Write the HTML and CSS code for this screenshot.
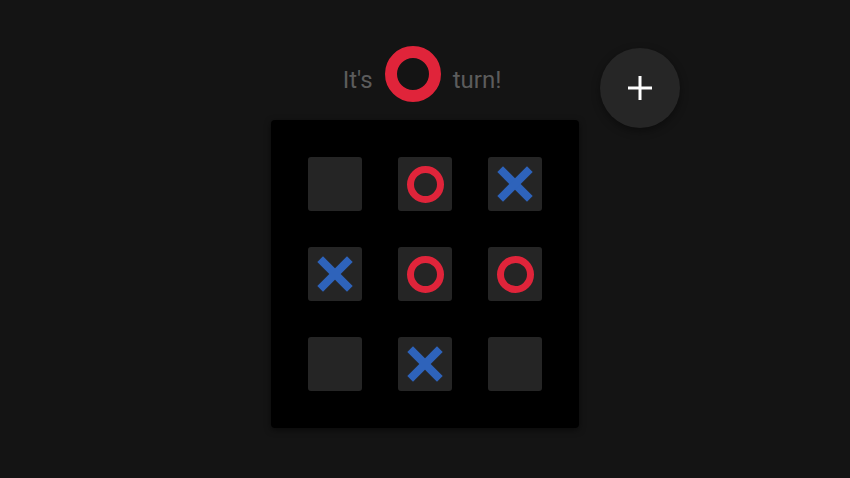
FILE: index.html
```html
<!DOCTYPE html>
<html lang="en">

<head>
    <meta charset="UTF-8">
    <meta name="viewport" content="width=device-width, initial-scale=1.0">
    <title>Tic Tac Toe</title>
    <link rel="stylesheet" href="styles.css">
</head>

<body>

    <div class="game">
        <!-- Turno actual -->
        <div class="turn">
            <span class="turn-text">It's</span>
            <span class="mark-o big"></span>
            <span class="turn-text">turn!</span>
        </div>

        <div class="board">
            <div class="cell"></div>
            <div class="cell"><span class="mark-o"></span></div>
            <div class="cell"><span class="mark-x"></span></div>

            <div class="cell"><span class="mark-x"></span></div>
            <div class="cell"><span class="mark-o"></span></div>
            <div class="cell"><span class="mark-o"></span></div>

            <div class="cell"></div>
            <div class="cell"><span class="mark-x"></span></div>
            <div class="cell"></div>
        </div>
    </div>

    <button class="fab" aria-label="Nuevo juego">
        <svg width="24" height="24" viewBox="0 0 24 24">
            <path d="M12 0v24M0 12h24" stroke="#fff" stroke-width="3" fill="none" />
        </svg>
    </button>

</body>

</html>
```

FILE: styles.css
```css
body {
    font-family: Roboto, "Liberation Sans", sans-serif;
    margin: 0;
    padding: 0;
    background-color: #141414;
    height: 478px;
    overflow: hidden;
}

.game {
    display: flex;
    flex-direction: column;
    align-items: center;
    padding-top: 46px;
}

/* Estilo del turno */
.turn {
    display: flex;
    align-items: center;
    gap: 12px;
    margin-right: 6px;
    margin-bottom: 18px;
}

.turn-text {
    color: #5c5c5c;
    font-size: 24px;
    padding-top: 11px;
}

.mark-o {
    display: block;
    width: 23px;
    height: 23px;
    border: 7px solid #e0243a;
    border-radius: 50%;
}

.mark-o.big {
    width: 32px;
    height: 32px;
    border-width: 12px;
}

.mark-x {
    display: block;
    position: relative;
    width: 36px;
    height: 36px;
}

.mark-x::before,
.mark-x::after {
    content: "";
    position: absolute;
    left: -3px;
    top: 14px;
    width: 42px;
    height: 8px;
    background-color: #2e63bb;
    transform: rotate(45deg);
}

.mark-x::after {
    transform: rotate(-45deg);
}

/* Tablero */
.board {
    display: grid;
    grid-template-columns: repeat(3, 54px);
    grid-auto-rows: 54px;
    gap: 36px;
    padding: 37px;
    background-color: #000;
    border-radius: 4px;
    box-shadow: 0 2px 6px rgba(0, 0, 0, 0.5);
}

.cell {
    display: flex;
    align-items: center;
    justify-content: center;
    background-color: #252525;
    border-radius: 3px;
}

.fab {
    position: absolute;
    top: 48px;
    left: 600px;
    width: 80px;
    height: 80px;
    display: flex;
    align-items: center;
    justify-content: center;
    border: none;
    border-radius: 50%;
    background-color: #262626;
    box-shadow: 0 3px 8px rgba(0, 0, 0, 0.4);
    cursor: pointer;
}
```
